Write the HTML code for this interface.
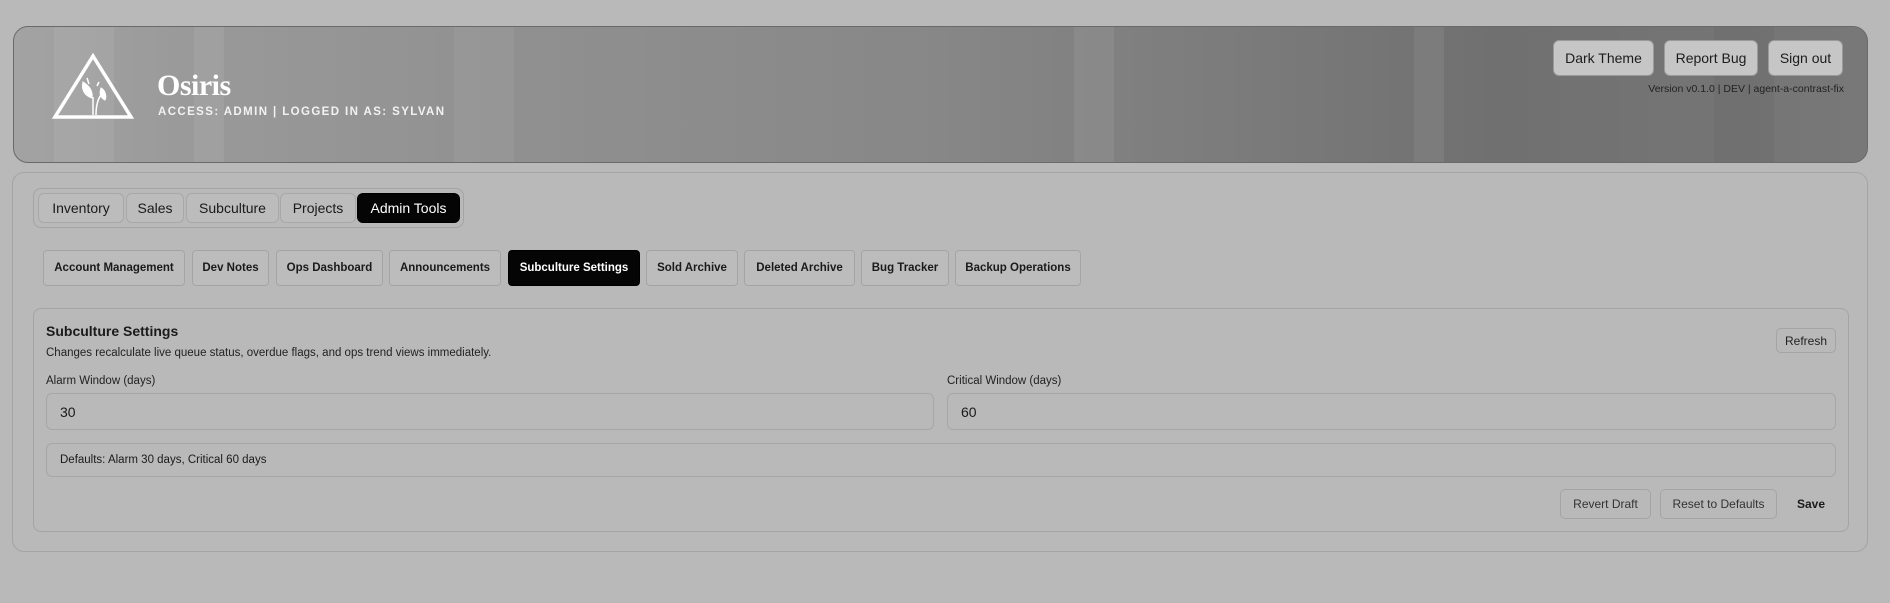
<!DOCTYPE html>
<html><head><meta charset="utf-8"><style>
*{box-sizing:border-box;margin:0;padding:0}
body{width:1890px;height:603px;background:#b9b9b9;font-family:"Liberation Sans",sans-serif;color:#1a1a1a;position:relative;overflow:hidden}
.abs{position:absolute}
.hdr{left:13px;top:26px;width:1855px;height:137px;border-radius:15px;border:1px solid #6a6a6a;
background:linear-gradient(90deg,#a3a3a3 0%,#999 10%,#8f8f8f 30%,#878787 50%,#7c7c7c 65%,#707070 80%,#787878 100%);overflow:hidden}
.stripe{position:absolute;top:0;height:100%;background:rgba(255,255,255,.07)}
.btn{position:absolute;background:#c6c6c6;border:1px solid #9a9a9a;border-radius:6px;font-size:14px;display:flex;align-items:center;justify-content:center;color:#1c1c1c;white-space:nowrap}
.panel{left:12px;top:172px;width:1856px;height:380px;border:1px solid #a4a4a4;border-radius:12px}
.tabgrp{left:33px;top:188px;width:431px;height:40px;border:1px solid #a4a4a4;border-radius:8px}
.tab{position:absolute;top:193px;height:30px;border:1px solid #a8a8a8;border-radius:6px;font-size:14px;display:flex;align-items:center;justify-content:center;background:#bcbcbc;white-space:nowrap}
.blk{background:#050505!important;color:#fff;border-color:#000!important}
.sub{position:absolute;top:250px;height:36px;border:1px solid #a4a4a4;border-radius:4px;font-size:11.5px;font-weight:bold;display:flex;align-items:center;justify-content:center;background:#bcbcbc;white-space:nowrap}
.card{left:33px;top:308px;width:1816px;height:224px;border:1px solid #a4a4a4;border-radius:8px}
.inp{position:absolute;border:1px solid #a6a6a6;border-radius:6px;font-size:14px;padding-left:13px;display:flex;align-items:center}
.sb{position:absolute;border:1px solid #a4a4a4;border-radius:5px;font-size:12px;display:flex;align-items:center;justify-content:center;color:#333;white-space:nowrap}
</style></head><body>
<div class="abs hdr">
 <div class="stripe" style="left:40px;width:60px"></div>
 <div class="stripe" style="left:180px;width:30px"></div>
 <div class="stripe" style="left:440px;width:60px;background:rgba(255,255,255,.05)"></div>
 <div class="stripe" style="left:1060px;width:40px"></div>
 <div class="stripe" style="left:1400px;width:30px"></div>
 <div class="stripe" style="left:1700px;width:60px;background:rgba(0,0,0,.04)"></div>
</div>
<svg class="abs" style="left:52px;top:52px" width="82" height="68" viewBox="0 0 82 68" fill="none" stroke="#fff">
 <path d="M41 4 L79 65 L3 65 Z" stroke-width="3.5" stroke-linejoin="miter"/>
 <path d="M41 63 L41 45 M44 63 C44 53 46 47 49 43" stroke-width="1.5"/>
 <path d="M31 30 C29 38 33 44 40 46 C41 40 38 34 31 30Z" fill="#fff" stroke-width="1"/>
 <path d="M49 36 C53 38 55 44 53 48 C49 46 47 42 49 36Z" fill="#fff" stroke-width="1"/>
 <path d="M35 26 L37 32 M47 30 L45 34" stroke-width="1.5"/>
</svg>
<div class="abs" style="left:157px;top:69px;font-family:'Liberation Serif',serif;font-weight:bold;font-size:30px;color:#fff;letter-spacing:-0.5px">Osiris</div>
<div class="abs" style="left:158px;top:106px;font-size:11.5px;font-weight:bold;color:#f2f2f2;letter-spacing:1.4px">ACCESS: ADMIN | LOGGED IN AS: SYLVAN</div>
<div class="btn" style="left:1553px;top:40px;width:101px;height:36px">Dark Theme</div>
<div class="btn" style="left:1664px;top:40px;width:94px;height:36px">Report Bug</div>
<div class="btn" style="left:1768px;top:40px;width:75px;height:36px">Sign out</div>
<div class="abs" style="right:46px;top:83px;font-size:10.5px;color:#222">Version v0.1.0 | DEV | agent-a-contrast-fix</div>

<div class="abs panel"></div>
<div class="abs tabgrp"></div>
<div class="tab" style="left:38px;width:86px">Inventory</div>
<div class="tab" style="left:126px;width:58px">Sales</div>
<div class="tab" style="left:186px;width:93px">Subculture</div>
<div class="tab" style="left:280px;width:76px">Projects</div>
<div class="tab blk" style="left:357px;width:103px">Admin Tools</div>

<div class="sub" style="left:43px;width:142px">Account Management</div>
<div class="sub" style="left:192px;width:77px">Dev Notes</div>
<div class="sub" style="left:276px;width:107px">Ops Dashboard</div>
<div class="sub" style="left:389px;width:112px">Announcements</div>
<div class="sub blk" style="left:508px;width:132px">Subculture Settings</div>
<div class="sub" style="left:646px;width:92px">Sold Archive</div>
<div class="sub" style="left:744px;width:111px">Deleted Archive</div>
<div class="sub" style="left:861px;width:88px">Bug Tracker</div>
<div class="sub" style="left:955px;width:126px">Backup Operations</div>

<div class="abs card"></div>
<div class="abs" style="left:46px;top:323px;font-size:14px;font-weight:bold">Subculture Settings</div>
<div class="abs" style="left:46px;top:347px;font-size:11.5px;color:#222">Changes recalculate live queue status, overdue flags, and ops trend views immediately.</div>
<div class="sb" style="left:1776px;top:328px;width:60px;height:25px;color:#222">Refresh</div>
<div class="abs" style="left:46px;top:375px;font-size:11.5px;color:#222">Alarm Window (days)</div>
<div class="abs" style="left:947px;top:375px;font-size:11.5px;color:#222">Critical Window (days)</div>
<div class="inp" style="left:46px;top:393px;width:888px;height:37px">30</div>
<div class="inp" style="left:947px;top:393px;width:889px;height:37px">60</div>
<div class="inp" style="left:46px;top:443px;width:1790px;height:34px;font-size:11.5px">Defaults: Alarm 30 days, Critical 60 days</div>
<div class="sb" style="left:1560px;top:489px;width:91px;height:30px">Revert Draft</div>
<div class="sb" style="left:1660px;top:489px;width:117px;height:30px">Reset to Defaults</div>
<div class="abs" style="left:1797px;top:497px;font-size:12px;font-weight:bold">Save</div>
</body></html>
